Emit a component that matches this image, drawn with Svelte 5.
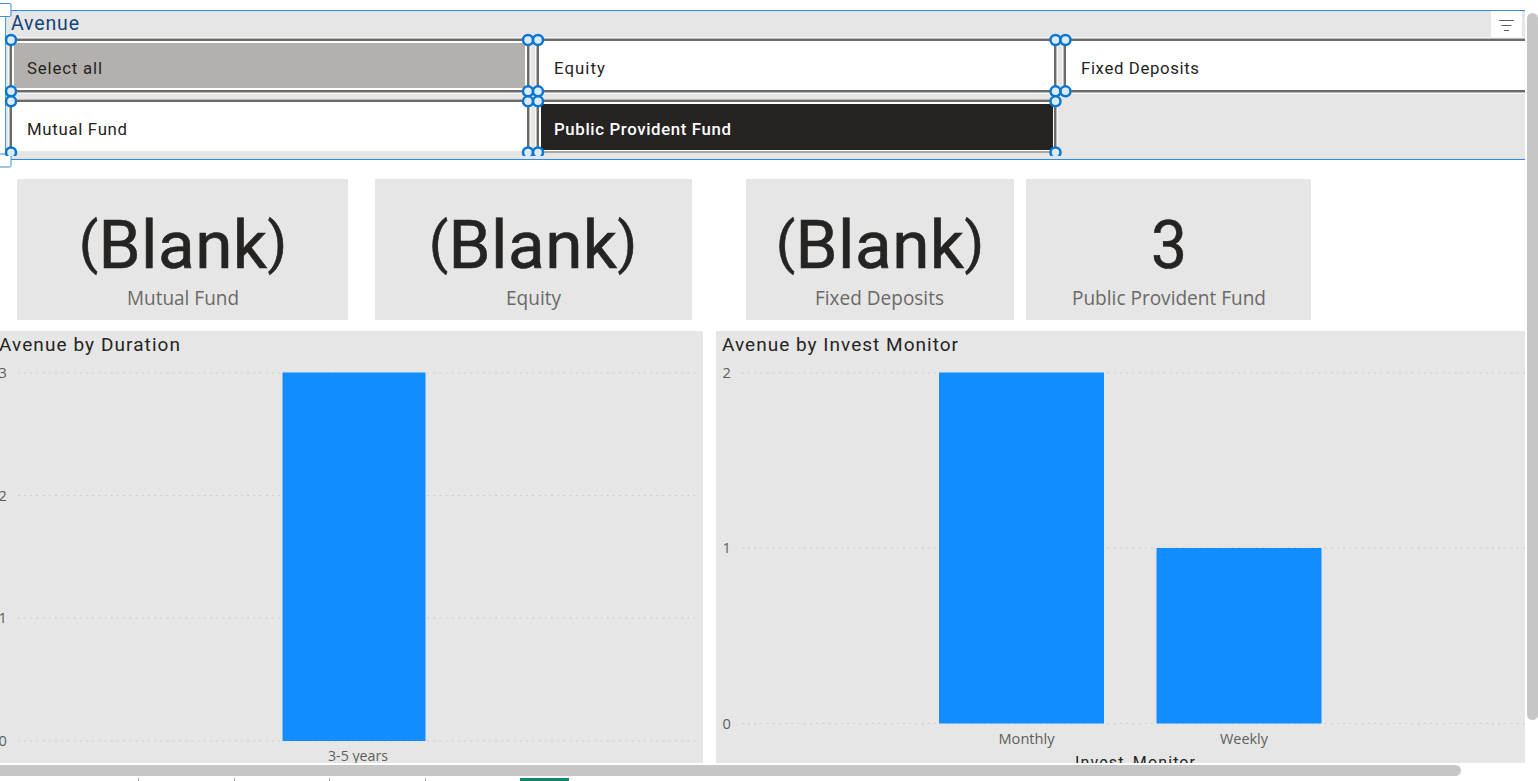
<script>
  const tiles = [
    { name: 'Select all', w: 75, kind: 'all' },
    { name: 'Equity', w: 51, kind: '' },
    { name: 'Fixed Deposits', w: 118, kind: '' },
    { name: 'Mutual Fund', w: 100, kind: 'low' },
    { name: 'Public Provident Fund', w: 177, kind: 'low active' }
  ];
  const cards = [
    { label: 'Mutual Fund', value: 'Blank', lw: 112 },
    { label: 'Equity', value: 'Blank', lw: 55 },
    { label: 'Fixed Deposits', value: 'Blank', lw: 129 },
    { label: 'Public Provident Fund', value: '3', lw: 194 }
  ];
  const handles = [
    [11, 40], [528, 40], [538, 40], [1055.5, 40], [1065.5, 40],
    [11, 91.3], [528, 91.3], [538, 91.3], [1055.5, 91.3], [1065.5, 91.3],
    [11, 101.3], [528, 101.3], [538, 101.3], [1055.5, 101.3],
    [11, 152.5], [528, 152.5], [538, 152.5], [1055.5, 152.5]
  ];
  const duration = {
    width: 703, title: 'Avenue by Duration', tx: -1, tw: 181,
    x1: 18, x2: 695, ax: -1.5,
    ticks: [[3, 42], [2, 164.5], [1, 287], [0, 410]],
    bars: [{ x: 282.5, y: 41.5, w: 143, h: 368.5, label: '3-5 years', lx: 328, lw: 60, ly: 430 }]
  };
  const monitor = {
    width: 809, title: 'Avenue by Invest Monitor', tx: 6, tw: 236,
    x1: 26, x2: 809, ax: 6.5,
    ticks: [[2, 42], [1, 217], [0, 392.5]],
    bars: [
      { x: 223, y: 41.5, w: 165, h: 351, label: 'Monthly', lx: 282.5, lw: 56, ly: 413 },
      { x: 440.5, y: 217, w: 165, h: 175.5, label: 'Weekly', lx: 504, lw: 48, ly: 413 }
    ],
    axis: 'Invest_Monitor'
  };
</script>

{#snippet label(text, w, h, base, cls, adjust = 'spacing')}
  <svg class={cls} width={w} height={h}><text x="0" y={base} textLength={w} lengthAdjust={adjust}>{text}</text></svg>
{/snippet}

{#snippet chart(c)}
  <svg class="chart" width={c.width} height="432">
    <text class="title" x={c.tx} y="20" textLength={c.tw} lengthAdjust="spacing">{c.title}</text>
    {#each c.ticks as [n, y]}
      <line class="grid" x1={c.x1} x2={c.x2} y1={y} y2={y} />
      <text class="tick" x={c.ax} y={y + 5.3}>{n}</text>
    {/each}
    {#each c.bars as b}
      <rect x={b.x} y={b.y} width={b.w} height={b.h} fill="#118dff" />
      <text class="tick" x={b.lx} y={b.ly} textLength={b.lw} lengthAdjust="spacingAndGlyphs">{b.label}</text>
    {/each}
    {#if c.axis}
      <text class="axis" x="359" y="436.5" textLength="120" lengthAdjust="spacing">{c.axis}</text>
    {/if}
  </svg>
{/snippet}

<div class="app">
  <div class="main">
    <div class="canvas">
      <section class="slicer">
        <header>
          {@render label('Avenue', 68, 28, 19, 'heading')}
          <button class="filter" aria-label="Filters">
            <svg width="31" height="26" stroke="#605e5c" stroke-width="1">
              <path d="M8 9.5h15M10.5 14.5h10M13 19.5h5" />
            </svg>
          </button>
        </header>
        <div class="tiles">
          {#each tiles as t}
            <div class="tile {t.kind}">
              <div class="face">{@render label(t.name, t.w, 45, t.kind.startsWith('low') ? 30.5 : 31, 'name')}</div>
            </div>
          {/each}
        </div>
        <svg class="marks" width="1525" height="168" fill="none">
          <rect x="-5" y="3.5" width="16" height="13" rx="1.5" fill="#fff" stroke="#3a8bd8" />
          <rect x="-5" y="154" width="16" height="13" rx="1.5" fill="#fff" stroke="#3a8bd8" />
          <clipPath id="edge"><rect x="0" y="0" width="1525" height="156" /></clipPath>
          <g clip-path="url(#edge)">
            {#each handles as [x, y]}
              <circle cx={x} cy={y} r="5" fill="#dcebf8" stroke="#0b76cf" stroke-width="2.5" />
            {/each}
          </g>
        </svg>
      </section>

      <section class="cards">
        {#each cards as c}
          <div class="card">
            <svg class="value" width="220" height="100">
              {#if c.value === 'Blank'}
                <text x="110" y="89" text-anchor="middle" textLength="208" lengthAdjust="spacing"><tspan class="paren" dy="-6">(</tspan><tspan dy="6">{c.value}</tspan><tspan class="paren" dy="-6">)</tspan></text>
              {:else}
                <text x="110" y="89" text-anchor="middle" textLength="36" lengthAdjust="spacingAndGlyphs">{c.value}</text>
              {/if}
            </svg>
            {@render label(c.label, c.lw, 30, 26, 'caption', 'spacingAndGlyphs')}
          </div>
        {/each}
      </section>

      <section class="charts">
        {@render chart(duration)}
        {@render chart(monitor)}
      </section>
    </div>
    <div class="vbar"></div>
  </div>
  <div class="hbar"></div>
  <div class="tabs"><i></i><i></i><i></i><i></i><b></b></div>
</div>

<style>
  :global(body) { background: #fff; overflow: hidden; }
  .app { width: 1538px; height: 781px; overflow: hidden; display: flex; flex-direction: column; background: #fff; }
  .main { display: flex; height: 763px; gap: 2px; }
  .canvas { width: 1525px; height: 763px; overflow: hidden; }
  svg { display: block; flex: none; overflow: visible; }
  text { white-space: pre; }

  .slicer {
    position: relative; box-sizing: border-box; height: 150px; margin: 10px 0 0 5px; width: 1600px;
    background: #e6e6e6; border: 1px solid #3d8ad2; border-left-color: #4a9fe4;
    box-shadow: inset 0 0 0 1px #d3e4f2;
  }
  header { display: flex; justify-content: space-between; height: 28px; width: 1516px; padding-left: 5px; box-sizing: border-box; }
  .heading { font: 19.5px Roboto, sans-serif; fill: #16447a; }
  .filter { width: 31px; height: 26px; padding: 0; border: 0; background: #fff; }
  .tiles { display: grid; grid-template-columns: repeat(3, 519px); grid-auto-rows: 53px; gap: 8px; padding-left: 4px; }
  .tile {
    box-sizing: border-box; border: 2px solid #6c6b6a; background: #fff; padding: 2px;
    box-shadow: 0 0 0 1px #b9b8b7, 0 0 0 2px #f7f7f7;
  }
  .face { box-sizing: border-box; height: 45px; padding-left: 13px; }
  .all .face { background: #b3b0ad; }
  .low { border-bottom: 0; height: 51px; box-shadow: 0 -1px 0 #b9b8b7, -1px 0 0 #b9b8b7, 1px 0 0 #b9b8b7, -2px 0 0 #f7f7f7, 2px 0 0 #f7f7f7; }
  .active .face { background: #252423; margin-right: -1px; height: 46px; }
  .active { border-bottom: 2px solid #aaa7a5; height: 53px; }
  .name { font: 16.8px Roboto, sans-serif; fill: #252423; }
  .active .name { font-weight: 500; fill: #fff; }
  .marks { position: absolute; left: -6px; top: -11px; }

  .cards { display: flex; padding: 19px 0 0 17px; }
  .card { width: 331px; height: 141px; background: #e6e6e6; display: flex; flex-direction: column; align-items: center; }
  .card:nth-child(2) { width: 317px; margin-left: 26.5px; }
  .card:nth-child(3) { width: 268.5px; margin-left: 54px; }
  .card:nth-child(4) { width: 285px; margin-left: 12px; }
  .value { font: 67.5px Roboto, sans-serif; fill: #252423; stroke: #252423; stroke-width: 0.6px; }
  .paren { font-size: 56px; }
  .caption { font: 19.6px "Open Sans", sans-serif; fill: #6b6967; }

  .charts { display: flex; gap: 13px; padding-top: 11px; }
  .chart { background: #e6e6e6; overflow: hidden; }
  .title { font: 19px Roboto, sans-serif; fill: #252423; }
  .tick { font: 14.6px "Open Sans", sans-serif; fill: #605e5c; }
  .axis { font: 16px Roboto, sans-serif; fill: #252423; }
  .grid { stroke: #c8c8c8; stroke-width: 1; stroke-dasharray: 1.5 4.7; }

  .vbar { width: 11px; height: 707px; margin-top: 13px; border-radius: 6px; background: #c6c6c6; }
  .hbar { width: 1461px; height: 11px; margin-top: 2px; border-radius: 0 6px 6px 0; background: #c6c6c6; }
  .tabs { display: flex; height: 3px; margin-top: 2px; padding-left: 138px; }
  .tabs i { width: 1px; margin-right: 94.7px; background: #aaa; }
  .tabs b { width: 49px; margin-left: -1px; background: #138468; }
</style>
